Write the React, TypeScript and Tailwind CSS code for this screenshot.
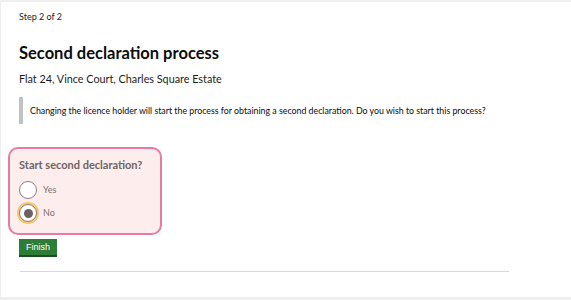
export default function App() {
    return (
        <div className="w-[571px] h-[300px] bg-[#efefef] pt-[2px] pl-px overflow-hidden" style={{ fontFamily: "Lato, 'Open Sans', sans-serif" }}>
            <div className="bg-white h-[295px] pt-[8px] pl-[18px] pr-[62px]">
                <p className="text-[9px] leading-[14px] text-[#1d1d1d]">Step 2 of 2</p>
                <h1 className="mt-[19px] text-[16.5px] leading-[20px] font-bold text-[#0b0c0c]">Second declaration process</h1>
                <p className="mt-[9px] text-[10.8px] leading-[14px] text-[#1d1d1d]">Flat 24, Vince Court, Charles Square Estate</p>

                {/* inset text */}
                <div className="mt-[11px] border-l-4 border-[#bfc1c3] h-[27px] flex items-center pl-[7px]">
                    <p className="text-[8.8px] leading-[12px] text-[#0b0c0c] whitespace-nowrap">
                        Changing the licence holder will start the process for obtaining a second declaration. Do you wish to start this process?
                    </p>
                </div>

                {/* radios, highlighted */}
                <div className="mt-[23px] -ml-[11px] w-[154px] h-[88px] rounded-[10px] border-2 border-[#ea7aa3] bg-[#fdeded] pl-[9px] pt-[8px]">
                    <p className="text-[11px] leading-[16px] font-bold text-[#6e6464]">Start second declaration?</p>
                    <div className="mt-[8px] flex items-center gap-[6px]">
                        <span className="w-[18px] h-[18px] rounded-full border-[1.5px] border-[#8b7f7f] bg-white"></span>
                        <span className="text-[9px] text-[#7a7070]">Yes</span>
                    </div>
                    <div className="mt-[5px] flex items-center gap-[6px]">
                        <span className="w-[18px] h-[18px] rounded-full border-[1.5px] border-[#8b7f7f] bg-white ring-2 ring-[#f7c56d] flex items-center justify-center">
                            <span className="w-[9px] h-[9px] rounded-full bg-[#6e6060]"></span>
                        </span>
                        <span className="text-[9px] text-[#7a7070]">No</span>
                    </div>
                </div>

                <button className="block mt-[4px] w-[38px] h-[18px] bg-[#2e7d36] border-b-2 border-[#1b4d20] text-white text-[9px] leading-[14px]" style={{ fontFamily: "'Liberation Sans', Arial, sans-serif" }}>
                    Finish
                </button>

                <div className="mt-[14px] ml-px h-px bg-[#d8d8d8]"></div>
            </div>
        </div>
    );
}
